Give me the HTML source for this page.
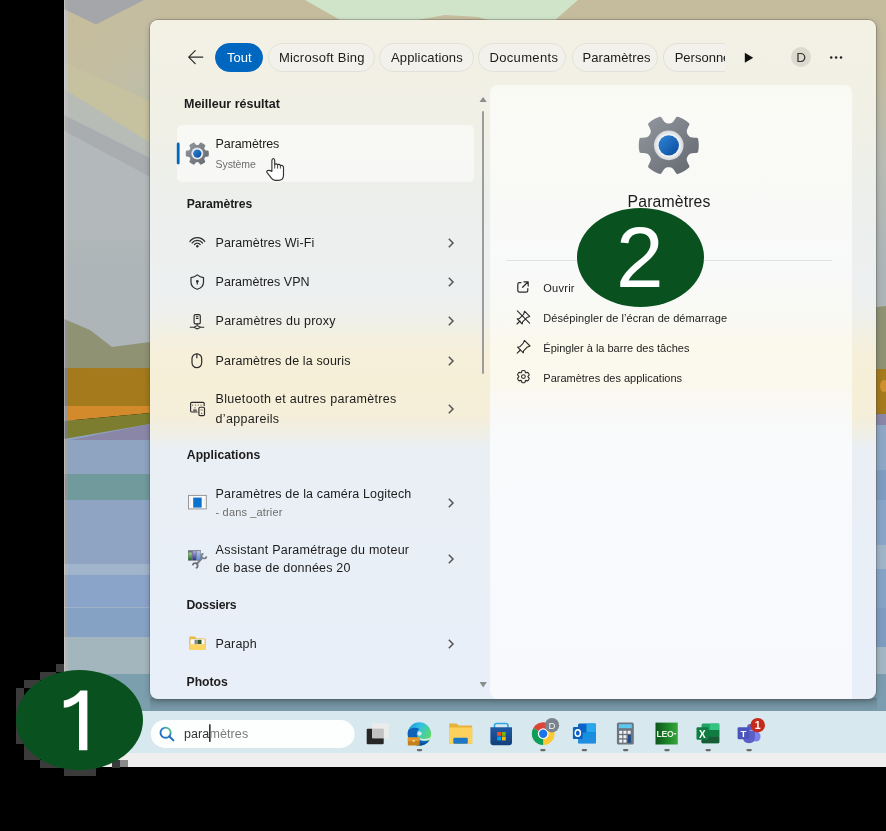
<!DOCTYPE html>
<html><head><meta charset="utf-8">
<style>
*{box-sizing:border-box;margin:0;padding:0}
html,body{width:886px;height:831px;overflow:hidden;background:#000;font-family:"Liberation Sans",sans-serif;color:#1c1c1c}
.abs{position:absolute}
#wall{position:absolute;left:64px;top:0;width:822px;height:711px}
#taskbar{position:absolute;left:64px;top:711px;width:822px;height:42px;background:#d7e9ef}
#strip{position:absolute;left:64px;top:753px;width:822px;height:14px;background:#efefef}
#panel{position:absolute;left:150px;top:20px;width:726px;height:679px;border-radius:8px;overflow:hidden;
 background:linear-gradient(180deg,#f3f1e4 0px,#f1f0e6 100px,#ecefec 180px,#edf0f0 270px,#eef0ee 290px,#f2f0e4 312px,#f6efd9 335px,#f6efd8 370px,#f5eed9 395px,#f0efe5 412px,#eaeff5 430px,#e8eff9 679px);
 box-shadow:0 0 0 1px rgba(90,90,80,.35),0 2px 6px rgba(0,0,0,.25)}
#card{position:absolute;left:340px;top:65px;width:362px;height:614px;border-radius:8px 8px 0 8px;
 background:linear-gradient(180deg,#fafaf5 0,#f9faf7 120px,#f8f9f9 180px,#f9f9f4 230px,#fbf8ec 260px,#fbf8ee 300px,#f9f9f7 325px,#f8fafc 360px,#f7f9fd 614px)}
#best{position:absolute;left:26.5px;top:105px;width:297px;height:57px;border-radius:5px;background:rgba(255,255,255,.55)}
.t{position:absolute;white-space:nowrap}
.pill{position:absolute;top:22.5px;height:29px;border-radius:14.5px;background:#f2f1ec;border:1px solid #e2e1d9}
.ell{position:absolute;background:#09521f;border-radius:50%}
.dig{position:absolute;color:#fff;font-size:83px;line-height:83px;white-space:nowrap}
</style></head><body>
<svg id="wall" viewBox="64 0 822 711" width="822" height="711">
 <defs>
  <filter id="soft" x="0" y="0" width="1" height="1"><feGaussianBlur stdDeviation="0.6"/></filter>
  <linearGradient id="gtop" x1="0" y1="0" x2="0" y2="1">
   <stop offset="0" stop-color="#c5bc9d"/><stop offset="0.18" stop-color="#c3bc9f"/><stop offset="0.4" stop-color="#b9bcb2"/><stop offset="0.7" stop-color="#adb5b8"/><stop offset="1" stop-color="#adb5b8"/>
  </linearGradient>
  <linearGradient id="gband" x1="0" y1="0" x2="0" y2="1">
   <stop offset="0" stop-color="#66828f"/><stop offset="0.3" stop-color="#6f8e9c"/><stop offset="1" stop-color="#7a9bab"/>
  </linearGradient>
   <linearGradient id="gtan" gradientUnits="userSpaceOnUse" x1="70" y1="20" x2="150" y2="100"><stop offset="0" stop-color="#c6bd9c"/><stop offset="0.5" stop-color="#c4bda1"/><stop offset="1" stop-color="#bcbea9"/></linearGradient>
 </defs>
 <g filter="url(#soft)">
 <rect x="64" y="0" width="822" height="380" fill="url(#gtop)"/>
 <rect x="64" y="420" width="822" height="291" fill="#8ea5c0"/>
 <polygon points="64,9 96,24.5 144,0 160,0 160,108 152,102 64,62" fill="url(#gtan)"/>
 <polygon points="64,0 144,0 96,24.5 64,9" fill="#a4a6a9"/>
 <polygon points="305,0 578,0 554,21 342,21" fill="#cfe4c9"/>
 <polygon points="412,21 445,15 478,17 492,21" fill="#c7bd9f"/>
 <polygon points="64,62 152,102 152,144 64,89" fill="#c6c29f"/>
 <polygon points="64,89 152,144 152,160 64,115" fill="#b8bcb6"/>
 <polygon points="64,115 152,159 152,178 64,131" fill="#a9adb0"/>
 <polygon points="64,131 152,178 152,240 64,240" fill="#b3b9ba"/>
 <polygon points="64,319 90,330 112,347 150,342 877,307 886,306 886,370 64,370" fill="#8f9273"/>
 <polygon points="64,368 886,369 886,414 64,406" fill="#a47a1e"/>
 <polygon points="64,406 150,406 150,413 64,421" fill="#d38a2c"/>
 <ellipse cx="884" cy="386" rx="4" ry="6" fill="#d1902e"/>
 <polygon points="64,421 150,413 150,424 64,439" fill="#7b7d2e"/>
 <polygon points="70,440 150,424 877,414 886,414 886,425 150,440" fill="#8a86a8"/>
 <rect x="64" y="440" width="822" height="34" fill="#8fa4c0"/>
 <rect x="64" y="474" width="90" height="26" fill="#6f9a9c"/>
 <rect x="64" y="500" width="90" height="64" fill="#8fa3c2"/>
 <rect x="64" y="564" width="90" height="11" fill="#a0b4cb"/>
 <rect x="64" y="575" width="90" height="33" fill="#8aa3c8"/>
 <rect x="64" y="607" width="90" height="1" fill="#a0b2c8"/>
 <rect x="64" y="608" width="90" height="29" fill="#85a2c5"/>
 <rect x="64" y="637" width="90" height="37" fill="#a3b6bd"/>
 <rect x="64" y="674" width="90" height="37" fill="#7b9fad"/>
 <rect x="870" y="425" width="16" height="45" fill="#8ea7c5"/>
 <rect x="870" y="470" width="16" height="30" fill="#809cc0"/>
 <rect x="870" y="500" width="16" height="45" fill="#8aa4c8"/>
 <rect x="870" y="545" width="16" height="24" fill="#a0b4c8"/>
 <rect x="870" y="569" width="16" height="39" fill="#86a3c6"/>
 <rect x="870" y="608" width="16" height="39" fill="#7f9cc0"/>
 <rect x="870" y="647" width="16" height="27" fill="#a3b6c3"/>
 <rect x="870" y="674" width="16" height="37" fill="#7c9daf"/>
 <rect x="150" y="698" width="727" height="13" fill="url(#gband)"/>
 </g>
</svg>
<div class="abs" style="left:64px;top:0;width:4px;height:711px;backdrop-filter:grayscale(1) brightness(1.02)"></div>
<div class="abs" style="left:64px;top:0;width:1px;height:711px;background:rgba(230,230,230,.35)"></div>
<div id="taskbar"></div>
<div id="strip"></div>
<svg class="abs" style="left:0;top:0" width="886" height="831" viewBox="0 0 886 831">
<defs>
<linearGradient id="edge1" x1="0" y1="0" x2="1" y2="1"><stop offset="0" stop-color="#35c1f1"/><stop offset="0.5" stop-color="#2bb0e0"/><stop offset="1" stop-color="#5ad06a"/></linearGradient>
<linearGradient id="edge2" x1="0" y1="0" x2="0" y2="1"><stop offset="0" stop-color="#0c59a4"/><stop offset="1" stop-color="#114a8b"/></linearGradient>
<linearGradient id="store" x1="0" y1="0" x2="0" y2="1"><stop offset="0" stop-color="#1f5aa6"/><stop offset="1" stop-color="#123f7c"/></linearGradient>
<linearGradient id="leo" x1="0" y1="0" x2="1" y2="0"><stop offset="0" stop-color="#0b5518"/><stop offset="0.6" stop-color="#1f8a2a"/><stop offset="1" stop-color="#3aa83c"/></linearGradient>
<linearGradient id="srch" x1="0" y1="1" x2="1" y2="0"><stop offset="0" stop-color="#1b67c2"/><stop offset="0.6" stop-color="#2a7fd0"/><stop offset="0.85" stop-color="#53c486"/></linearGradient>
</defs>
<rect x="150.8" y="719.9" width="203.8" height="28" rx="14" fill="#fdfefe"/>
<circle cx="165.6" cy="732.7" r="5.1" fill="none" stroke="url(#srch)" stroke-width="1.9"/>
<path d="M169.4,736.5 L173.4,740.4" stroke="#1d6cc4" stroke-width="2" stroke-linecap="round"/>
<rect x="209.1" y="724.3" width="1.5" height="17.6" fill="#222"/>
<rect x="366.7" y="728.7" width="17" height="15.6" rx="1" fill="#262626"/>
<rect x="372.1" y="723.3" width="16.9" height="14.9" rx="1" fill="#ececec" opacity="0.92"/>
<rect x="372.1" y="728.7" width="11.6" height="9.5" fill="#c2c2c2"/>
<defs><linearGradient id="edgeA" x1="0" y1="0" x2="1" y2="0.6"><stop offset="0" stop-color="#1f86d6"/><stop offset="0.45" stop-color="#2fc0e6"/><stop offset="1" stop-color="#62dc5a"/></linearGradient><clipPath id="edgeClip"><circle cx="419.4" cy="734" r="11.7"/></clipPath></defs>
<g clip-path="url(#edgeClip)">
<rect x="407" y="721" width="25" height="26" fill="url(#edgeA)"/>
<path d="M406,733 C409,727.5 415,726.5 419.5,729 C416.5,731 416,735 418,738 C420.5,741.5 425,742 431,739.5 L431,747 L406,747 Z" fill="#0e62b8"/>
<path d="M417.8,737.6 C420.5,740.2 425,740.6 431,738.2" fill="none" stroke="#d6e9ef" stroke-width="1.6"/>
<path d="M431,741 C427,744.5 421,745 416,743" fill="none" stroke="#0a4d96" stroke-width="2"/>
</g>
<circle cx="419.6" cy="733.6" r="2.1" fill="#d6e9ef"/>
<rect x="407.8" y="737.4" width="11.8" height="8" rx="1" fill="#c8801e"/><rect x="407.8" y="737.4" width="11.8" height="3.6" fill="#e09a2c"/><rect x="412.8" y="740" width="1.8" height="1.8" fill="#f5e3b0"/>
<path d="M449.2,743.8 V724.6 Q449.2,723.5 450.3,723.5 H456.5 L458.5,725.6 H471.1 Q472.2,725.6 472.2,726.7 V743.8 Z" fill="#e8b23a"/>
<rect x="449.2" y="727.6" width="23" height="16.2" rx="0.8" fill="#fcd25c"/>
<rect x="453.3" y="737.7" width="14.5" height="6.1" rx="1.2" fill="#1d78c9"/>
<path d="M494.5,728.2 V725.5 Q494.5,723.5 496.5,723.5 H506 Q508,723.5 508,725.5 V728.2" fill="none" stroke="#2fa8e8" stroke-width="1.6"/>
<path d="M490.4,727.2 H512 V742.2 Q512,745.2 509,745.2 H493.4 Q490.4,745.2 490.4,742.2 Z" fill="url(#store)"/>
<rect x="497.2" y="732" width="3.8" height="3.8" fill="#f25022"/><rect x="501.9" y="732" width="3.8" height="3.8" fill="#7fba00"/><rect x="497.2" y="736.6" width="3.8" height="3.8" fill="#00a4ef"/><rect x="501.9" y="736.6" width="3.8" height="3.8" fill="#ffb900"/>
<path d="M543.2,733.7 L533.33,728.00 A11.4,11.4 0 0 1 553.07,728.00 Z" fill="#db4437"/>
<path d="M543.2,733.7 L553.07,728.00 A11.4,11.4 0 0 1 543.20,745.10 Z" fill="#fcc934"/>
<path d="M543.2,733.7 L543.20,745.10 A11.4,11.4 0 0 1 533.33,728.00 Z" fill="#0f9d58"/>
<circle cx="543.2" cy="733.7" r="5.4" fill="#fff"/><circle cx="543.2" cy="733.7" r="4.2" fill="#1a73e8"/>
<circle cx="552" cy="725.2" r="7.2" fill="#7b848c"/>
<text x="552" y="728.7" text-anchor="middle" font-family="Liberation Sans" font-size="9.5" fill="#f4f4f4">D</text>
<rect x="578" y="723.5" width="17.9" height="19.7" rx="1.5" fill="#0a64c8"/>
<rect x="586.5" y="723.5" width="9.4" height="9" fill="#28a8ea"/><rect x="578" y="732.5" width="17.9" height="10.7" fill="#1490df"/>
<path d="M578,733 L587,738.5 L595.9,733 V743.2 H578 Z" fill="#1f8de0"/>
<rect x="572.9" y="726.9" width="9.8" height="12.2" rx="1.2" fill="#0f5fbd"/>
<ellipse cx="577.8" cy="733" rx="2.6" ry="3.3" fill="none" stroke="#fff" stroke-width="1.5"/>
<rect x="616.9" y="722.6" width="16.9" height="21.9" rx="1.6" fill="#6d757e"/>
<rect x="618.8" y="724.2" width="13" height="4" fill="#5cc8ef"/>
<rect x="619.2" y="730.8" width="3" height="3" fill="#f2f2f2"/>
<rect x="623.4" y="730.8" width="3" height="3" fill="#f2f2f2"/>
<rect x="627.6" y="730.8" width="3" height="3" fill="#f2f2f2"/>
<rect x="619.2" y="735.2" width="3" height="3" fill="#f2f2f2"/>
<rect x="623.4" y="735.2" width="3" height="3" fill="#f2f2f2"/>
<rect x="627.6" y="735.2" width="3" height="3" fill="#f2f2f2"/>
<rect x="619.2" y="739.6" width="3" height="3" fill="#f2f2f2"/>
<rect x="627.6" y="734.8" width="3.3" height="8" fill="#1e4a8a"/>
<rect x="623.4" y="739.6" width="3" height="3" fill="#f2f2f2"/>
<rect x="655.5" y="722.6" width="22.3" height="21.9" fill="url(#leo)"/>
<text x="656.5" y="737" font-family="Liberation Sans" font-size="8.6" font-weight="700" fill="#e8f5e6" letter-spacing="-0.3">LEO</text>
<path d="M673.8,733.8 H676.2" stroke="#e8f5e6" stroke-width="1.2"/>
<rect x="701.5" y="723.5" width="17.8" height="19.7" rx="1.5" fill="#21a366"/>
<rect x="701.5" y="730" width="17.8" height="6.6" fill="#107c41"/><rect x="701.5" y="736.6" width="17.8" height="6.6" rx="1" fill="#185c37"/><rect x="710" y="723.5" width="9.3" height="6.5" fill="#33c481"/>
<rect x="696.5" y="727.2" width="11.9" height="12.6" rx="1.2" fill="#107c41"/>
<text x="698.9" y="737.6" font-family="Liberation Sans" font-size="10" font-weight="700" fill="#fff">X</text>
<rect x="751.5" y="731.5" width="9" height="10" rx="4.5" fill="#7b83eb"/>
<path d="M743,730.5 H755 V737.5 Q755,743.2 749,743.2 Q743,743.2 743,737.5 Z" fill="#5b5fc7"/>
<circle cx="750.3" cy="727" r="3.1" fill="#5b5fc7"/>
<rect x="737.6" y="727.2" width="11.8" height="12" rx="1.2" fill="#4b53bc"/>
<text x="740.4" y="737.2" font-family="Liberation Sans" font-size="9.5" font-weight="700" fill="#fff">T</text>
<circle cx="757.7" cy="725.2" r="7.3" fill="#c42b1c"/>
<text x="757.7" y="729.2" text-anchor="middle" font-family="Liberation Sans" font-size="10.5" font-weight="700" fill="#fff">1</text>
<rect x="416.8" y="749" width="5.4" height="2.2" rx="1.1" fill="#6a6a6a"/>
<rect x="540.2" y="749" width="5.4" height="2.2" rx="1.1" fill="#6a6a6a"/>
<rect x="581.7" y="749" width="5.4" height="2.2" rx="1.1" fill="#6a6a6a"/>
<rect x="623.0" y="749" width="5.4" height="2.2" rx="1.1" fill="#6a6a6a"/>
<rect x="664.3" y="749" width="5.4" height="2.2" rx="1.1" fill="#6a6a6a"/>
<rect x="705.5" y="749" width="5.4" height="2.2" rx="1.1" fill="#6a6a6a"/>
<rect x="746.4" y="749" width="5.4" height="2.2" rx="1.1" fill="#6a6a6a"/>
</svg>

<div id="panel">
 <div id="card"></div>
 <div id="best"></div>
 <div class="pill" style="left:65px;width:48px;background:#0067c0;border-color:#0067c0"></div>
 <div class="pill" style="left:117.5px;width:107px"></div>
 <div class="pill" style="left:229px;width:95px"></div>
 <div class="pill" style="left:328px;width:88px"></div>
 <div class="pill" style="left:422px;width:86px"></div>
 <div class="pill" style="left:513.4px;width:62px;border-radius:15px 0 0 15px;border-right:none"></div>
  <div class="abs" style="left:640.5px;top:27px;width:20.3px;height:20.3px;border-radius:50%;background:#dcdace"></div>
 <!-- separator -->
 <div class="abs" style="left:356px;top:239.5px;width:326px;height:1px;background:#e2e2de"></div>
 <!-- scrollbar -->
 <div class="abs" style="left:332px;top:91px;width:2.1px;height:263px;background:#9c9c9c;border-radius:1px"></div>
</div>
<div class="t" style="left:227.0px;top:51.30px;font-size:13px;line-height:13px;font-weight:400;color:#fff;letter-spacing:0px;">Tout</div>
<div class="t" style="left:278.9px;top:51.30px;font-size:13px;line-height:13px;font-weight:400;color:#1c1c1c;letter-spacing:0.25px;">Microsoft Bing</div>
<div class="t" style="left:391.0px;top:51.30px;font-size:13px;line-height:13px;font-weight:400;color:#1c1c1c;letter-spacing:0.15px;">Applications</div>
<div class="t" style="left:489.4px;top:51.30px;font-size:13px;line-height:13px;font-weight:400;color:#1c1c1c;letter-spacing:0.35px;">Documents</div>
<div class="t" style="left:582.4px;top:51.30px;font-size:13px;line-height:13px;font-weight:400;color:#1c1c1c;letter-spacing:0.1px;">Paramètres</div>
<div class="t" style="left:674.7px;top:51.30px;font-size:13px;line-height:13px;font-weight:400;color:#1c1c1c;letter-spacing:0px;width:50.8px;overflow:hidden">Personne</div>
<div class="t" style="left:796.2px;top:51.47px;font-size:13.5px;line-height:13.5px;font-weight:400;color:#333;letter-spacing:0px;">D</div>
<div class="t" style="left:184.0px;top:97.82px;font-size:12.5px;line-height:12.5px;font-weight:700;color:#1c1c1c;letter-spacing:0px;">Meilleur résultat</div>
<div class="t" style="left:215.6px;top:138.32px;font-size:12.5px;line-height:12.5px;font-weight:400;color:#1c1c1c;letter-spacing:-0.1px;">Paramètres</div>
<div class="t" style="left:215.6px;top:159.01px;font-size:10.5px;line-height:10.5px;font-weight:400;color:#6d6d6d;letter-spacing:-0.1px;">Système</div>
<div class="t" style="left:186.7px;top:197.97px;font-size:12.2px;line-height:12.2px;font-weight:700;color:#1c1c1c;letter-spacing:-0.1px;">Paramètres</div>
<div class="t" style="left:215.6px;top:236.92px;font-size:12.5px;line-height:12.5px;font-weight:400;color:#1c1c1c;letter-spacing:0.09px;">Paramètres Wi-Fi</div>
<svg class="abs" style="left:446.9px;top:236.7px" width="9" height="12" viewBox="0 0 9 12"><path d="M1.8 1.8 L6 6 L1.8 10.2" fill="none" stroke="#555" stroke-width="1.5"/></svg>
<div class="t" style="left:215.6px;top:276.02px;font-size:12.5px;line-height:12.5px;font-weight:400;color:#1c1c1c;letter-spacing:0.01px;">Paramètres VPN</div>
<svg class="abs" style="left:446.9px;top:276px" width="9" height="12" viewBox="0 0 9 12"><path d="M1.8 1.8 L6 6 L1.8 10.2" fill="none" stroke="#555" stroke-width="1.5"/></svg>
<div class="t" style="left:215.6px;top:315.12px;font-size:12.5px;line-height:12.5px;font-weight:400;color:#1c1c1c;letter-spacing:0.21px;">Paramètres du proxy</div>
<svg class="abs" style="left:446.9px;top:315.3px" width="9" height="12" viewBox="0 0 9 12"><path d="M1.8 1.8 L6 6 L1.8 10.2" fill="none" stroke="#555" stroke-width="1.5"/></svg>
<div class="t" style="left:215.6px;top:354.52px;font-size:12.5px;line-height:12.5px;font-weight:400;color:#1c1c1c;letter-spacing:0.13px;">Paramètres de la souris</div>
<svg class="abs" style="left:446.9px;top:354.6px" width="9" height="12" viewBox="0 0 9 12"><path d="M1.8 1.8 L6 6 L1.8 10.2" fill="none" stroke="#555" stroke-width="1.5"/></svg>
<div class="t" style="left:215.6px;top:393.42px;font-size:12.5px;line-height:12.5px;font-weight:400;color:#1c1c1c;letter-spacing:0.31px;">Bluetooth et autres paramètres</div>
<div class="t" style="left:215.6px;top:412.52px;font-size:12.5px;line-height:12.5px;font-weight:400;color:#1c1c1c;letter-spacing:0.3px;">d’appareils</div>
<svg class="abs" style="left:446.9px;top:402.5px" width="9" height="12" viewBox="0 0 9 12"><path d="M1.8 1.8 L6 6 L1.8 10.2" fill="none" stroke="#555" stroke-width="1.5"/></svg>
<div class="t" style="left:186.8px;top:448.87px;font-size:12.2px;line-height:12.2px;font-weight:700;color:#1c1c1c;letter-spacing:0.03px;">Applications</div>
<div class="t" style="left:215.6px;top:487.62px;font-size:12.5px;line-height:12.5px;font-weight:400;color:#1c1c1c;letter-spacing:0.15px;">Paramètres de la caméra Logitech</div>
<div class="t" style="left:215.6px;top:507.29px;font-size:11px;line-height:11px;font-weight:400;color:#6d6d6d;letter-spacing:0.15px;">- dans _atrier</div>
<svg class="abs" style="left:446.9px;top:496.5px" width="9" height="12" viewBox="0 0 9 12"><path d="M1.8 1.8 L6 6 L1.8 10.2" fill="none" stroke="#555" stroke-width="1.5"/></svg>
<div class="t" style="left:215.6px;top:543.62px;font-size:12.5px;line-height:12.5px;font-weight:400;color:#1c1c1c;letter-spacing:0.24px;">Assistant Paramétrage du moteur</div>
<div class="t" style="left:215.6px;top:562.42px;font-size:12.5px;line-height:12.5px;font-weight:400;color:#1c1c1c;letter-spacing:0.21px;">de base de données 20</div>
<svg class="abs" style="left:446.9px;top:552.8px" width="9" height="12" viewBox="0 0 9 12"><path d="M1.8 1.8 L6 6 L1.8 10.2" fill="none" stroke="#555" stroke-width="1.5"/></svg>
<div class="t" style="left:186.5px;top:599.37px;font-size:12.2px;line-height:12.2px;font-weight:700;color:#1c1c1c;letter-spacing:-0.2px;">Dossiers</div>
<div class="t" style="left:215.5px;top:637.72px;font-size:12.5px;line-height:12.5px;font-weight:400;color:#1c1c1c;letter-spacing:0.16px;">Paraph</div>
<svg class="abs" style="left:446.9px;top:638px" width="9" height="12" viewBox="0 0 9 12"><path d="M1.8 1.8 L6 6 L1.8 10.2" fill="none" stroke="#555" stroke-width="1.5"/></svg>
<div class="t" style="left:186.5px;top:675.87px;font-size:12.2px;line-height:12.2px;font-weight:700;color:#1c1c1c;letter-spacing:0px;">Photos</div>
<div class="t" style="left:627.6px;top:194.33px;font-size:15.8px;line-height:15.8px;font-weight:400;color:#1c1c1c;letter-spacing:0.12px;">Paramètres</div>
<div class="t" style="left:543.3px;top:283.09px;font-size:11px;line-height:11px;font-weight:400;color:#1c1c1c;letter-spacing:0.25px;">Ouvrir</div>
<div class="t" style="left:543.3px;top:313.09px;font-size:11px;line-height:11px;font-weight:400;color:#1c1c1c;letter-spacing:0.08px;">Désépingler de l’écran de démarrage</div>
<div class="t" style="left:543.3px;top:342.99px;font-size:11px;line-height:11px;font-weight:400;color:#1c1c1c;letter-spacing:0px;">Épingler à la barre des tâches</div>
<div class="t" style="left:543.3px;top:372.59px;font-size:11px;line-height:11px;font-weight:400;color:#1c1c1c;letter-spacing:0px;">Paramètres des applications</div>
<div class="t" style="left:183.9px;top:728.42px;font-size:12.5px;line-height:12.5px;font-weight:400;color:#333;letter-spacing:0.12px;">para<span style="color:#7a7a7a">mètres</span></div>
<svg class="abs" style="left:0;top:0" width="886" height="831" viewBox="0 0 886 831">
<defs>
<linearGradient id="gg" x1="0" y1="0" x2="1" y2="1"><stop offset="0" stop-color="#9499a0"/><stop offset="1" stop-color="#62676f"/></linearGradient>
<linearGradient id="gb" x1="0" y1="0" x2="1" y2="1"><stop offset="0" stop-color="#2f86d8"/><stop offset="1" stop-color="#0a4a9c"/></linearGradient>
<radialGradient id="gw" cx="0.5" cy="0.5" r="0.5"><stop offset="0.6" stop-color="#ffffff"/><stop offset="1" stop-color="#d4d6da"/></radialGradient>
</defs>
<path d="M202.8,57.1 H189 M195.2,50.6 L188.7,57.1 L195.2,63.6" fill="none" stroke="#2b2b2b" stroke-width="1.25" stroke-linecap="round" stroke-linejoin="round"/>
<path d="M744.8,52.8 L753.2,57.8 L744.8,62.8 Z" fill="#111"/>
<circle cx="831.2" cy="57.6" r="1.25" fill="#222"/>
<circle cx="836.1" cy="57.6" r="1.25" fill="#222"/>
<circle cx="841.0" cy="57.6" r="1.25" fill="#222"/>
<rect x="176.8" y="142.6" width="2.8" height="21.8" rx="1.4" fill="#0067c0"/>
<path d="M208.84,153.60 L208.84,153.70 L208.84,153.80 L208.84,153.90 L208.84,154.00 L208.83,154.10 L208.83,154.20 L208.82,154.30 L208.82,154.41 L208.81,154.51 L208.80,154.61 L208.79,154.71 L208.78,154.81 L208.77,154.91 L208.76,155.01 L208.75,155.11 L208.73,155.21 L208.72,155.31 L208.70,155.41 L208.69,155.51 L208.67,155.60 L208.65,155.70 L208.63,155.80 L208.61,155.90 L208.59,156.00 L208.57,156.10 L208.54,156.20 L208.51,156.29 L208.46,156.38 L208.38,156.47 L208.24,156.53 L208.03,156.57 L207.77,156.60 L207.50,156.62 L207.24,156.64 L206.99,156.65 L206.76,156.67 L206.55,156.69 L206.36,156.72 L206.19,156.75 L206.04,156.78 L205.90,156.81 L205.78,156.85 L205.67,156.90 L205.57,156.94 L205.48,156.99 L205.40,157.04 L205.32,157.09 L205.25,157.14 L205.19,157.20 L205.13,157.25 L205.08,157.31 L205.02,157.37 L204.97,157.42 L204.92,157.48 L204.87,157.54 L204.83,157.60 L204.78,157.66 L204.74,157.72 L204.69,157.78 L204.65,157.84 L204.62,157.91 L204.59,157.98 L204.56,158.05 L204.53,158.12 L204.50,158.19 L204.47,158.26 L204.45,158.33 L204.42,158.40 L204.40,158.48 L204.38,158.56 L204.36,158.64 L204.34,158.72 L204.33,158.80 L204.32,158.89 L204.32,158.99 L204.33,159.09 L204.34,159.20 L204.36,159.31 L204.38,159.44 L204.42,159.58 L204.47,159.72 L204.53,159.89 L204.60,160.06 L204.69,160.25 L204.79,160.46 L204.90,160.69 L205.02,160.92 L205.14,161.17 L205.24,161.40 L205.31,161.61 L205.32,161.76 L205.29,161.88 L205.24,161.96 L205.17,162.04 L205.10,162.11 L205.02,162.18 L204.95,162.25 L204.87,162.31 L204.80,162.38 L204.72,162.44 L204.64,162.51 L204.56,162.57 L204.49,162.63 L204.41,162.70 L204.33,162.76 L204.25,162.82 L204.17,162.88 L204.09,162.94 L204.00,163.00 L203.92,163.06 L203.84,163.11 L203.76,163.17 L203.67,163.23 L203.59,163.28 L203.50,163.34 L203.42,163.39 L203.33,163.44 L203.25,163.50 L203.16,163.55 L203.07,163.60 L202.98,163.65 L202.90,163.70 L202.81,163.75 L202.72,163.79 L202.63,163.84 L202.54,163.89 L202.45,163.93 L202.36,163.98 L202.27,164.02 L202.18,164.06 L202.09,164.10 L202.00,164.15 L201.90,164.19 L201.81,164.23 L201.72,164.27 L201.62,164.30 L201.53,164.34 L201.44,164.38 L201.34,164.41 L201.25,164.45 L201.15,164.48 L201.06,164.52 L200.96,164.55 L200.87,164.58 L200.77,164.61 L200.67,164.64 L200.58,164.66 L200.47,164.66 L200.36,164.63 L200.23,164.54 L200.09,164.38 L199.94,164.17 L199.78,163.94 L199.64,163.72 L199.50,163.52 L199.37,163.33 L199.24,163.16 L199.13,163.00 L199.02,162.87 L198.91,162.75 L198.82,162.65 L198.72,162.57 L198.63,162.49 L198.54,162.43 L198.46,162.38 L198.37,162.33 L198.29,162.29 L198.21,162.26 L198.13,162.23 L198.05,162.21 L197.98,162.19 L197.90,162.17 L197.82,162.16 L197.75,162.14 L197.67,162.13 L197.60,162.12 L197.52,162.11 L197.45,162.10 L197.37,162.09 L197.30,162.09 L197.23,162.09 L197.15,162.10 L197.08,162.11 L197.00,162.12 L196.93,162.13 L196.85,162.14 L196.78,162.16 L196.70,162.17 L196.62,162.19 L196.55,162.21 L196.47,162.23 L196.39,162.26 L196.31,162.29 L196.23,162.33 L196.14,162.38 L196.06,162.43 L195.97,162.49 L195.88,162.57 L195.78,162.65 L195.69,162.75 L195.58,162.87 L195.47,163.00 L195.36,163.16 L195.23,163.33 L195.10,163.52 L194.96,163.72 L194.82,163.94 L194.66,164.17 L194.51,164.38 L194.37,164.54 L194.24,164.63 L194.13,164.66 L194.02,164.66 L193.93,164.64 L193.83,164.61 L193.73,164.58 L193.64,164.55 L193.54,164.52 L193.45,164.48 L193.35,164.45 L193.26,164.41 L193.16,164.38 L193.07,164.34 L192.98,164.30 L192.88,164.27 L192.79,164.23 L192.70,164.19 L192.60,164.15 L192.51,164.10 L192.42,164.06 L192.33,164.02 L192.24,163.98 L192.15,163.93 L192.06,163.89 L191.97,163.84 L191.88,163.79 L191.79,163.75 L191.70,163.70 L191.62,163.65 L191.53,163.60 L191.44,163.55 L191.35,163.50 L191.27,163.44 L191.18,163.39 L191.10,163.34 L191.01,163.28 L190.93,163.23 L190.84,163.17 L190.76,163.11 L190.68,163.06 L190.60,163.00 L190.51,162.94 L190.43,162.88 L190.35,162.82 L190.27,162.76 L190.19,162.70 L190.11,162.63 L190.04,162.57 L189.96,162.51 L189.88,162.44 L189.80,162.38 L189.73,162.31 L189.65,162.25 L189.58,162.18 L189.50,162.11 L189.43,162.04 L189.36,161.96 L189.31,161.88 L189.28,161.76 L189.29,161.61 L189.36,161.40 L189.46,161.17 L189.58,160.92 L189.70,160.69 L189.81,160.46 L189.91,160.25 L190.00,160.06 L190.07,159.89 L190.13,159.72 L190.18,159.58 L190.22,159.44 L190.24,159.31 L190.26,159.20 L190.27,159.09 L190.28,158.99 L190.28,158.89 L190.27,158.80 L190.26,158.72 L190.24,158.64 L190.22,158.56 L190.20,158.48 L190.18,158.40 L190.15,158.33 L190.13,158.26 L190.10,158.19 L190.07,158.12 L190.04,158.05 L190.01,157.98 L189.98,157.91 L189.95,157.84 L189.91,157.78 L189.86,157.72 L189.82,157.66 L189.77,157.60 L189.73,157.54 L189.68,157.48 L189.63,157.42 L189.58,157.37 L189.52,157.31 L189.47,157.25 L189.41,157.20 L189.35,157.14 L189.28,157.09 L189.20,157.04 L189.12,156.99 L189.03,156.94 L188.93,156.90 L188.82,156.85 L188.70,156.81 L188.56,156.78 L188.41,156.75 L188.24,156.72 L188.05,156.69 L187.84,156.67 L187.61,156.65 L187.36,156.64 L187.10,156.62 L186.83,156.60 L186.57,156.57 L186.36,156.53 L186.22,156.47 L186.14,156.38 L186.09,156.29 L186.06,156.20 L186.03,156.10 L186.01,156.00 L185.99,155.90 L185.97,155.80 L185.95,155.70 L185.93,155.60 L185.91,155.51 L185.90,155.41 L185.88,155.31 L185.87,155.21 L185.85,155.11 L185.84,155.01 L185.83,154.91 L185.82,154.81 L185.81,154.71 L185.80,154.61 L185.79,154.51 L185.78,154.41 L185.78,154.30 L185.77,154.20 L185.77,154.10 L185.76,154.00 L185.76,153.90 L185.76,153.80 L185.76,153.70 L185.76,153.60 L185.76,153.50 L185.76,153.40 L185.76,153.30 L185.76,153.20 L185.77,153.10 L185.77,153.00 L185.78,152.90 L185.78,152.79 L185.79,152.69 L185.80,152.59 L185.81,152.49 L185.82,152.39 L185.83,152.29 L185.84,152.19 L185.85,152.09 L185.87,151.99 L185.88,151.89 L185.90,151.79 L185.91,151.69 L185.93,151.60 L185.95,151.50 L185.97,151.40 L185.99,151.30 L186.01,151.20 L186.03,151.10 L186.06,151.00 L186.09,150.91 L186.14,150.82 L186.22,150.73 L186.36,150.67 L186.57,150.63 L186.83,150.60 L187.10,150.58 L187.36,150.56 L187.61,150.55 L187.84,150.53 L188.05,150.51 L188.24,150.48 L188.41,150.45 L188.56,150.42 L188.70,150.39 L188.82,150.35 L188.93,150.30 L189.03,150.26 L189.12,150.21 L189.20,150.16 L189.28,150.11 L189.35,150.06 L189.41,150.00 L189.47,149.95 L189.52,149.89 L189.58,149.83 L189.63,149.78 L189.68,149.72 L189.73,149.66 L189.77,149.60 L189.82,149.54 L189.86,149.48 L189.91,149.42 L189.95,149.36 L189.98,149.29 L190.01,149.22 L190.04,149.15 L190.07,149.08 L190.10,149.01 L190.13,148.94 L190.15,148.87 L190.18,148.80 L190.20,148.72 L190.22,148.64 L190.24,148.56 L190.26,148.48 L190.27,148.40 L190.28,148.31 L190.28,148.21 L190.27,148.11 L190.26,148.00 L190.24,147.89 L190.22,147.76 L190.18,147.62 L190.13,147.48 L190.07,147.31 L190.00,147.14 L189.91,146.95 L189.81,146.74 L189.70,146.51 L189.58,146.28 L189.46,146.03 L189.36,145.80 L189.29,145.59 L189.28,145.44 L189.31,145.32 L189.36,145.24 L189.43,145.16 L189.50,145.09 L189.58,145.02 L189.65,144.95 L189.73,144.89 L189.80,144.82 L189.88,144.76 L189.96,144.69 L190.04,144.63 L190.11,144.57 L190.19,144.50 L190.27,144.44 L190.35,144.38 L190.43,144.32 L190.51,144.26 L190.60,144.20 L190.68,144.14 L190.76,144.09 L190.84,144.03 L190.93,143.97 L191.01,143.92 L191.10,143.86 L191.18,143.81 L191.27,143.76 L191.35,143.70 L191.44,143.65 L191.53,143.60 L191.62,143.55 L191.70,143.50 L191.79,143.45 L191.88,143.41 L191.97,143.36 L192.06,143.31 L192.15,143.27 L192.24,143.22 L192.33,143.18 L192.42,143.14 L192.51,143.10 L192.60,143.05 L192.70,143.01 L192.79,142.97 L192.88,142.93 L192.98,142.90 L193.07,142.86 L193.16,142.82 L193.26,142.79 L193.35,142.75 L193.45,142.72 L193.54,142.68 L193.64,142.65 L193.73,142.62 L193.83,142.59 L193.93,142.56 L194.02,142.54 L194.13,142.54 L194.24,142.57 L194.37,142.66 L194.51,142.82 L194.66,143.03 L194.82,143.26 L194.96,143.48 L195.10,143.68 L195.23,143.87 L195.36,144.04 L195.47,144.20 L195.58,144.33 L195.69,144.45 L195.78,144.55 L195.88,144.63 L195.97,144.71 L196.06,144.77 L196.14,144.82 L196.23,144.87 L196.31,144.91 L196.39,144.94 L196.47,144.97 L196.55,144.99 L196.62,145.01 L196.70,145.03 L196.78,145.04 L196.85,145.06 L196.93,145.07 L197.00,145.08 L197.08,145.09 L197.15,145.10 L197.23,145.11 L197.30,145.11 L197.37,145.11 L197.45,145.10 L197.52,145.09 L197.60,145.08 L197.67,145.07 L197.75,145.06 L197.82,145.04 L197.90,145.03 L197.98,145.01 L198.05,144.99 L198.13,144.97 L198.21,144.94 L198.29,144.91 L198.37,144.87 L198.46,144.82 L198.54,144.77 L198.63,144.71 L198.72,144.63 L198.82,144.55 L198.91,144.45 L199.02,144.33 L199.13,144.20 L199.24,144.04 L199.37,143.87 L199.50,143.68 L199.64,143.48 L199.78,143.26 L199.94,143.03 L200.09,142.82 L200.23,142.66 L200.36,142.57 L200.47,142.54 L200.58,142.54 L200.67,142.56 L200.77,142.59 L200.87,142.62 L200.96,142.65 L201.06,142.68 L201.15,142.72 L201.25,142.75 L201.34,142.79 L201.44,142.82 L201.53,142.86 L201.62,142.90 L201.72,142.93 L201.81,142.97 L201.90,143.01 L202.00,143.05 L202.09,143.10 L202.18,143.14 L202.27,143.18 L202.36,143.22 L202.45,143.27 L202.54,143.31 L202.63,143.36 L202.72,143.41 L202.81,143.45 L202.90,143.50 L202.98,143.55 L203.07,143.60 L203.16,143.65 L203.25,143.70 L203.33,143.76 L203.42,143.81 L203.50,143.86 L203.59,143.92 L203.67,143.97 L203.76,144.03 L203.84,144.09 L203.92,144.14 L204.00,144.20 L204.09,144.26 L204.17,144.32 L204.25,144.38 L204.33,144.44 L204.41,144.50 L204.49,144.57 L204.56,144.63 L204.64,144.69 L204.72,144.76 L204.80,144.82 L204.87,144.89 L204.95,144.95 L205.02,145.02 L205.10,145.09 L205.17,145.16 L205.24,145.24 L205.29,145.32 L205.32,145.44 L205.31,145.59 L205.24,145.80 L205.14,146.03 L205.02,146.28 L204.90,146.51 L204.79,146.74 L204.69,146.95 L204.60,147.14 L204.53,147.31 L204.47,147.48 L204.42,147.62 L204.38,147.76 L204.36,147.89 L204.34,148.00 L204.33,148.11 L204.32,148.21 L204.32,148.31 L204.33,148.40 L204.34,148.48 L204.36,148.56 L204.38,148.64 L204.40,148.72 L204.42,148.80 L204.45,148.87 L204.47,148.94 L204.50,149.01 L204.53,149.08 L204.56,149.15 L204.59,149.22 L204.62,149.29 L204.65,149.36 L204.69,149.42 L204.74,149.48 L204.78,149.54 L204.83,149.60 L204.87,149.66 L204.92,149.72 L204.97,149.78 L205.02,149.83 L205.08,149.89 L205.13,149.95 L205.19,150.00 L205.25,150.06 L205.32,150.11 L205.40,150.16 L205.48,150.21 L205.57,150.26 L205.67,150.30 L205.78,150.35 L205.90,150.39 L206.04,150.42 L206.19,150.45 L206.36,150.48 L206.55,150.51 L206.76,150.53 L206.99,150.55 L207.24,150.56 L207.50,150.58 L207.77,150.60 L208.03,150.63 L208.24,150.67 L208.38,150.73 L208.46,150.82 L208.51,150.91 L208.54,151.00 L208.57,151.10 L208.59,151.20 L208.61,151.30 L208.63,151.40 L208.65,151.50 L208.67,151.60 L208.69,151.69 L208.70,151.79 L208.72,151.89 L208.73,151.99 L208.75,152.09 L208.76,152.19 L208.77,152.29 L208.78,152.39 L208.79,152.49 L208.80,152.59 L208.81,152.69 L208.82,152.79 L208.82,152.90 L208.83,153.00 L208.83,153.10 L208.84,153.20 L208.84,153.30 L208.84,153.40 L208.84,153.50 Z" fill="url(#gg)" stroke-linejoin="round"/>
<circle cx="197.3" cy="153.6" r="6" fill="url(#gw)"/>
<circle cx="197.3" cy="153.6" r="4.2" fill="url(#gb)"/>
<path d="M698.75,145.35 L698.75,145.61 L698.75,145.87 L698.74,146.14 L698.74,146.40 L698.73,146.66 L698.71,146.92 L698.70,147.18 L698.68,147.44 L698.66,147.70 L698.64,147.97 L698.62,148.23 L698.59,148.49 L698.56,148.75 L698.53,149.01 L698.50,149.27 L698.46,149.53 L698.43,149.78 L698.39,150.04 L698.34,150.30 L698.30,150.56 L698.25,150.82 L698.20,151.08 L698.15,151.33 L698.10,151.59 L698.04,151.84 L697.97,152.10 L697.86,152.34 L697.68,152.56 L697.34,152.74 L696.82,152.87 L696.14,152.95 L695.41,153.00 L694.69,153.03 L694.01,153.07 L693.39,153.12 L692.82,153.17 L692.30,153.23 L691.84,153.30 L691.42,153.38 L691.05,153.47 L690.72,153.56 L690.42,153.67 L690.16,153.78 L689.92,153.90 L689.70,154.03 L689.50,154.16 L689.32,154.29 L689.15,154.43 L689.00,154.58 L688.85,154.72 L688.71,154.87 L688.58,155.02 L688.45,155.17 L688.33,155.33 L688.21,155.48 L688.09,155.63 L687.98,155.79 L687.86,155.94 L687.75,156.10 L687.64,156.26 L687.56,156.43 L687.48,156.61 L687.40,156.78 L687.33,156.96 L687.25,157.14 L687.18,157.32 L687.11,157.50 L687.04,157.69 L686.98,157.88 L686.92,158.07 L686.86,158.27 L686.82,158.48 L686.78,158.69 L686.75,158.92 L686.74,159.15 L686.74,159.40 L686.75,159.67 L686.79,159.96 L686.85,160.27 L686.93,160.60 L687.04,160.97 L687.18,161.37 L687.35,161.81 L687.55,162.28 L687.80,162.80 L688.07,163.37 L688.38,163.97 L688.70,164.62 L689.02,165.27 L689.30,165.90 L689.45,166.42 L689.46,166.80 L689.36,167.07 L689.20,167.28 L689.02,167.47 L688.83,167.65 L688.63,167.82 L688.43,167.99 L688.24,168.17 L688.04,168.33 L687.84,168.50 L687.63,168.67 L687.43,168.83 L687.22,168.99 L687.02,169.15 L686.81,169.31 L686.60,169.47 L686.39,169.62 L686.17,169.78 L685.96,169.93 L685.74,170.08 L685.53,170.22 L685.31,170.37 L685.09,170.51 L684.87,170.66 L684.65,170.80 L684.43,170.93 L684.20,171.07 L683.98,171.20 L683.75,171.33 L683.53,171.46 L683.30,171.59 L683.07,171.72 L682.84,171.84 L682.60,171.96 L682.37,172.08 L682.14,172.20 L681.90,172.32 L681.67,172.43 L681.43,172.54 L681.19,172.65 L680.95,172.76 L680.71,172.87 L680.47,172.97 L680.23,173.07 L679.99,173.17 L679.75,173.27 L679.50,173.36 L679.26,173.45 L679.01,173.55 L678.77,173.63 L678.52,173.72 L678.27,173.80 L678.02,173.88 L677.77,173.96 L677.52,174.02 L677.25,174.06 L676.97,174.01 L676.64,173.81 L676.27,173.42 L675.87,172.87 L675.46,172.26 L675.07,171.66 L674.69,171.09 L674.34,170.57 L674.01,170.10 L673.70,169.68 L673.41,169.32 L673.13,169.00 L672.87,168.72 L672.62,168.48 L672.38,168.28 L672.15,168.10 L671.93,167.96 L671.71,167.83 L671.50,167.73 L671.29,167.64 L671.08,167.56 L670.88,167.50 L670.68,167.44 L670.49,167.40 L670.29,167.36 L670.09,167.32 L669.90,167.29 L669.71,167.27 L669.51,167.24 L669.32,167.22 L669.13,167.20 L668.94,167.18 L668.75,167.16 L668.56,167.18 L668.37,167.20 L668.18,167.22 L667.99,167.24 L667.79,167.27 L667.60,167.29 L667.41,167.32 L667.21,167.36 L667.01,167.40 L666.82,167.44 L666.62,167.50 L666.42,167.56 L666.21,167.64 L666.00,167.73 L665.79,167.83 L665.57,167.96 L665.35,168.10 L665.12,168.28 L664.88,168.48 L664.63,168.72 L664.37,169.00 L664.09,169.32 L663.80,169.68 L663.49,170.10 L663.16,170.57 L662.81,171.09 L662.43,171.66 L662.04,172.26 L661.63,172.87 L661.23,173.42 L660.86,173.81 L660.53,174.01 L660.25,174.06 L659.98,174.02 L659.73,173.96 L659.48,173.88 L659.23,173.80 L658.98,173.72 L658.73,173.63 L658.49,173.55 L658.24,173.45 L658.00,173.36 L657.75,173.27 L657.51,173.17 L657.27,173.07 L657.03,172.97 L656.79,172.87 L656.55,172.76 L656.31,172.65 L656.07,172.54 L655.83,172.43 L655.60,172.32 L655.36,172.20 L655.13,172.08 L654.90,171.96 L654.66,171.84 L654.43,171.72 L654.20,171.59 L653.97,171.46 L653.75,171.33 L653.52,171.20 L653.30,171.07 L653.07,170.93 L652.85,170.80 L652.63,170.66 L652.41,170.51 L652.19,170.37 L651.97,170.22 L651.76,170.08 L651.54,169.93 L651.33,169.78 L651.11,169.62 L650.90,169.47 L650.69,169.31 L650.48,169.15 L650.28,168.99 L650.07,168.83 L649.87,168.67 L649.66,168.50 L649.46,168.33 L649.26,168.17 L649.07,167.99 L648.87,167.82 L648.67,167.65 L648.48,167.47 L648.30,167.28 L648.14,167.07 L648.04,166.80 L648.05,166.42 L648.20,165.90 L648.48,165.27 L648.80,164.62 L649.12,163.97 L649.43,163.37 L649.70,162.80 L649.95,162.28 L650.15,161.81 L650.32,161.37 L650.46,160.97 L650.57,160.60 L650.65,160.27 L650.71,159.96 L650.75,159.67 L650.76,159.40 L650.76,159.15 L650.75,158.92 L650.72,158.69 L650.68,158.48 L650.64,158.27 L650.58,158.07 L650.52,157.88 L650.46,157.69 L650.39,157.50 L650.32,157.32 L650.25,157.14 L650.17,156.96 L650.10,156.78 L650.02,156.61 L649.94,156.43 L649.86,156.26 L649.75,156.10 L649.64,155.94 L649.52,155.79 L649.41,155.63 L649.29,155.48 L649.17,155.33 L649.05,155.17 L648.92,155.02 L648.79,154.87 L648.65,154.72 L648.50,154.58 L648.35,154.43 L648.18,154.29 L648.00,154.16 L647.80,154.03 L647.58,153.90 L647.34,153.78 L647.08,153.67 L646.78,153.56 L646.45,153.47 L646.08,153.38 L645.66,153.30 L645.20,153.23 L644.68,153.17 L644.11,153.12 L643.49,153.07 L642.81,153.03 L642.09,153.00 L641.36,152.95 L640.68,152.87 L640.16,152.74 L639.82,152.56 L639.64,152.34 L639.53,152.10 L639.46,151.84 L639.40,151.59 L639.35,151.33 L639.30,151.08 L639.25,150.82 L639.20,150.56 L639.16,150.30 L639.11,150.04 L639.07,149.78 L639.04,149.53 L639.00,149.27 L638.97,149.01 L638.94,148.75 L638.91,148.49 L638.88,148.23 L638.86,147.97 L638.84,147.70 L638.82,147.44 L638.80,147.18 L638.79,146.92 L638.77,146.66 L638.76,146.40 L638.76,146.14 L638.75,145.87 L638.75,145.61 L638.75,145.35 L638.75,145.09 L638.75,144.83 L638.76,144.56 L638.76,144.30 L638.77,144.04 L638.79,143.78 L638.80,143.52 L638.82,143.26 L638.84,143.00 L638.86,142.73 L638.88,142.47 L638.91,142.21 L638.94,141.95 L638.97,141.69 L639.00,141.43 L639.04,141.17 L639.07,140.92 L639.11,140.66 L639.16,140.40 L639.20,140.14 L639.25,139.88 L639.30,139.62 L639.35,139.37 L639.40,139.11 L639.46,138.86 L639.53,138.60 L639.64,138.36 L639.82,138.14 L640.16,137.96 L640.68,137.83 L641.36,137.75 L642.09,137.70 L642.81,137.67 L643.49,137.63 L644.11,137.58 L644.68,137.53 L645.20,137.47 L645.66,137.40 L646.08,137.32 L646.45,137.23 L646.78,137.14 L647.08,137.03 L647.34,136.92 L647.58,136.80 L647.80,136.67 L648.00,136.54 L648.18,136.41 L648.35,136.27 L648.50,136.12 L648.65,135.98 L648.79,135.83 L648.92,135.68 L649.05,135.53 L649.17,135.37 L649.29,135.22 L649.41,135.07 L649.52,134.91 L649.64,134.76 L649.75,134.60 L649.86,134.44 L649.94,134.27 L650.02,134.09 L650.10,133.92 L650.17,133.74 L650.25,133.56 L650.32,133.38 L650.39,133.20 L650.46,133.01 L650.52,132.82 L650.58,132.63 L650.64,132.43 L650.68,132.22 L650.72,132.01 L650.75,131.78 L650.76,131.55 L650.76,131.30 L650.75,131.03 L650.71,130.74 L650.65,130.43 L650.57,130.10 L650.46,129.73 L650.32,129.33 L650.15,128.89 L649.95,128.42 L649.70,127.90 L649.43,127.33 L649.12,126.73 L648.80,126.08 L648.48,125.43 L648.20,124.80 L648.05,124.28 L648.04,123.90 L648.14,123.63 L648.30,123.42 L648.48,123.23 L648.67,123.05 L648.87,122.88 L649.07,122.71 L649.26,122.53 L649.46,122.37 L649.66,122.20 L649.87,122.03 L650.07,121.87 L650.28,121.71 L650.48,121.55 L650.69,121.39 L650.90,121.23 L651.11,121.08 L651.33,120.92 L651.54,120.77 L651.76,120.62 L651.97,120.48 L652.19,120.33 L652.41,120.19 L652.63,120.04 L652.85,119.90 L653.07,119.77 L653.30,119.63 L653.52,119.50 L653.75,119.37 L653.97,119.24 L654.20,119.11 L654.43,118.98 L654.66,118.86 L654.90,118.74 L655.13,118.62 L655.36,118.50 L655.60,118.38 L655.83,118.27 L656.07,118.16 L656.31,118.05 L656.55,117.94 L656.79,117.83 L657.03,117.73 L657.27,117.63 L657.51,117.53 L657.75,117.43 L658.00,117.34 L658.24,117.25 L658.49,117.15 L658.73,117.07 L658.98,116.98 L659.23,116.90 L659.48,116.82 L659.73,116.74 L659.98,116.68 L660.25,116.64 L660.53,116.69 L660.86,116.89 L661.23,117.28 L661.63,117.83 L662.04,118.44 L662.43,119.04 L662.81,119.61 L663.16,120.13 L663.49,120.60 L663.80,121.02 L664.09,121.38 L664.37,121.70 L664.63,121.98 L664.88,122.22 L665.12,122.42 L665.35,122.60 L665.57,122.74 L665.79,122.87 L666.00,122.97 L666.21,123.06 L666.42,123.14 L666.62,123.20 L666.82,123.26 L667.01,123.30 L667.21,123.34 L667.41,123.38 L667.60,123.41 L667.79,123.43 L667.99,123.46 L668.18,123.48 L668.37,123.50 L668.56,123.52 L668.75,123.54 L668.94,123.52 L669.13,123.50 L669.32,123.48 L669.51,123.46 L669.71,123.43 L669.90,123.41 L670.09,123.38 L670.29,123.34 L670.49,123.30 L670.68,123.26 L670.88,123.20 L671.08,123.14 L671.29,123.06 L671.50,122.97 L671.71,122.87 L671.93,122.74 L672.15,122.60 L672.38,122.42 L672.62,122.22 L672.87,121.98 L673.13,121.70 L673.41,121.38 L673.70,121.02 L674.01,120.60 L674.34,120.13 L674.69,119.61 L675.07,119.04 L675.46,118.44 L675.87,117.83 L676.27,117.28 L676.64,116.89 L676.97,116.69 L677.25,116.64 L677.52,116.68 L677.77,116.74 L678.02,116.82 L678.27,116.90 L678.52,116.98 L678.77,117.07 L679.01,117.15 L679.26,117.25 L679.50,117.34 L679.75,117.43 L679.99,117.53 L680.23,117.63 L680.47,117.73 L680.71,117.83 L680.95,117.94 L681.19,118.05 L681.43,118.16 L681.67,118.27 L681.90,118.38 L682.14,118.50 L682.37,118.62 L682.60,118.74 L682.84,118.86 L683.07,118.98 L683.30,119.11 L683.53,119.24 L683.75,119.37 L683.98,119.50 L684.20,119.63 L684.43,119.77 L684.65,119.90 L684.87,120.04 L685.09,120.19 L685.31,120.33 L685.53,120.48 L685.74,120.62 L685.96,120.77 L686.17,120.92 L686.39,121.08 L686.60,121.23 L686.81,121.39 L687.02,121.55 L687.22,121.71 L687.43,121.87 L687.63,122.03 L687.84,122.20 L688.04,122.37 L688.24,122.53 L688.43,122.71 L688.63,122.88 L688.83,123.05 L689.02,123.23 L689.20,123.42 L689.36,123.63 L689.46,123.90 L689.45,124.28 L689.30,124.80 L689.02,125.43 L688.70,126.08 L688.38,126.73 L688.07,127.33 L687.80,127.90 L687.55,128.42 L687.35,128.89 L687.18,129.33 L687.04,129.73 L686.93,130.10 L686.85,130.43 L686.79,130.74 L686.75,131.03 L686.74,131.30 L686.74,131.55 L686.75,131.78 L686.78,132.01 L686.82,132.22 L686.86,132.43 L686.92,132.63 L686.98,132.82 L687.04,133.01 L687.11,133.20 L687.18,133.38 L687.25,133.56 L687.33,133.74 L687.40,133.92 L687.48,134.09 L687.56,134.27 L687.64,134.44 L687.75,134.60 L687.86,134.76 L687.98,134.91 L688.09,135.07 L688.21,135.22 L688.33,135.37 L688.45,135.53 L688.58,135.68 L688.71,135.83 L688.85,135.98 L689.00,136.12 L689.15,136.27 L689.32,136.41 L689.50,136.54 L689.70,136.67 L689.92,136.80 L690.16,136.92 L690.42,137.03 L690.72,137.14 L691.05,137.23 L691.42,137.32 L691.84,137.40 L692.30,137.47 L692.82,137.53 L693.39,137.58 L694.01,137.63 L694.69,137.67 L695.41,137.70 L696.14,137.75 L696.82,137.83 L697.34,137.96 L697.68,138.14 L697.86,138.36 L697.97,138.60 L698.04,138.86 L698.10,139.11 L698.15,139.37 L698.20,139.62 L698.25,139.88 L698.30,140.14 L698.34,140.40 L698.39,140.66 L698.43,140.92 L698.46,141.17 L698.50,141.43 L698.53,141.69 L698.56,141.95 L698.59,142.21 L698.62,142.47 L698.64,142.73 L698.66,143.00 L698.68,143.26 L698.70,143.52 L698.71,143.78 L698.73,144.04 L698.74,144.30 L698.74,144.56 L698.75,144.83 L698.75,145.09 Z" fill="url(#gg)" stroke-linejoin="round"/>
<circle cx="668.75" cy="145.35" r="14.8" fill="url(#gw)"/>
<circle cx="668.75" cy="145.35" r="10.2" fill="url(#gb)"/>
<path d="M194.43,244.59 A3.5,3.5 0 0 1 200.17,244.59" fill="none" stroke="#2b2b2b" stroke-width="1.3" stroke-linecap="round"/>
<path d="M192.14,242.99 A6.3,6.3 0 0 1 202.46,242.99" fill="none" stroke="#2b2b2b" stroke-width="1.3" stroke-linecap="round"/>
<path d="M189.93,241.44 A9.0,9.0 0 0 1 204.67,241.44" fill="none" stroke="#2b2b2b" stroke-width="1.3" stroke-linecap="round"/>
<circle cx="197.3" cy="246.29999999999998" r="1.2" fill="#2b2b2b"/>
<path d="M197.3,274.9 C195.3,276.6 193.2,277.4 191,277.6 V282.2 C191,285.6 193.4,288 197.3,289.3 C201.2,288 203.5,285.6 203.5,282.2 V277.6 C201.4,277.4 199.3,276.6 197.3,274.9 Z" fill="none" stroke="#2b2b2b" stroke-width="1.2" stroke-linejoin="round"/>
<circle cx="197.3" cy="281.3" r="1.3" fill="#2b2b2b"/><rect x="196.7" y="281.5" width="1.2" height="3" fill="#2b2b2b"/>
<rect x="194.1" y="314.6" width="6.2" height="9.2" rx="1.4" fill="none" stroke="#2b2b2b" stroke-width="1.15"/>
<path d="M195.9,316.8 H198.5 M195.9,318.5 H198.5 M197.2,323.8 V325.6 M189.8,327.3 H194 M200.6,327.3 H204.2 M194,327.3 L197.2,325.6 L200.6,327.3 L197.2,329 Z" fill="none" stroke="#2b2b2b" stroke-width="1.05" stroke-linejoin="round"/>
<rect x="192" y="353.8" width="9.7" height="13.9" rx="4.85" fill="none" stroke="#2b2b2b" stroke-width="1.2"/>
<path d="M196.85,353.8 V358.2" stroke="#2b2b2b" stroke-width="1.2"/>
<path d="M204.2,406 V403.6 Q204.2,402.4 203,402.4 H191.8 Q190.6,402.4 190.6,403.6 V410.8 Q190.6,412 191.8,412 H197.6" fill="none" stroke="#2b2b2b" stroke-width="1.15"/>
<rect x="198.9" y="407.2" width="5.6" height="8.4" rx="1.2" fill="none" stroke="#2b2b2b" stroke-width="1.15"/>
<rect x="192.1" y="404.6" width="1" height="1" fill="#555"/>
<rect x="194.9" y="404.6" width="1" height="1" fill="#555"/>
<rect x="197.7" y="404.6" width="1" height="1" fill="#555"/>
<rect x="200.6" y="404.6" width="1" height="1" fill="#555"/>
<rect x="193.2" y="409.3" width="3.5" height="2.5" fill="#666"/><rect x="194.4" y="407.3" width="1.2" height="1" fill="#777"/>
<rect x="200.6" y="409.5" width="2.2" height="0.9" fill="#666"/><circle cx="201.7" cy="413.3" r="0.6" fill="#2b2b2b"/>
<rect x="188.5" y="495.4" width="17.8" height="13.5" fill="#fbfbfb" stroke="#8d8d8d" stroke-width="0.9"/>
<rect x="193.2" y="497.6" width="8.5" height="10" fill="#0b72cf"/>
<path d="M190.3,498.5 v8 M204.3,498.5 v8" stroke="#c8c8c8" stroke-width="0.6" stroke-dasharray="0.8 0.8"/>
<defs><linearGradient id="agr" x1="0" y1="0" x2="0" y2="1"><stop offset="0" stop-color="#9ad888"/><stop offset="1" stop-color="#1f6a22"/></linearGradient><linearGradient id="apu" x1="0" y1="0" x2="0" y2="1"><stop offset="0" stop-color="#b0a8f4"/><stop offset="1" stop-color="#2e2c8a"/></linearGradient><linearGradient id="abl" x1="0" y1="0" x2="0" y2="1"><stop offset="0" stop-color="#b8c4d8"/><stop offset="1" stop-color="#5a8ee0"/></linearGradient></defs>
<rect x="188" y="550.2" width="13" height="10.4" fill="#70747c"/>
<rect x="188.5" y="552.6" width="3.3" height="7.6" fill="url(#agr)"/><rect x="192.7" y="551.2" width="3.3" height="9" fill="url(#apu)"/><rect x="196.6" y="551" width="4" height="9.2" fill="url(#abl)"/>
<path d="M196.89,563.76 L202.31,557.84" stroke="#777c85" stroke-width="2" stroke-linecap="round"/>
<path d="M206.48,556.33 A2.5,2.5 0 1 1 203.46,553.56" fill="none" stroke="#777c85" stroke-width="1.7"/>
<path d="M192.72,565.27 A2.5,2.5 0 1 1 195.74,568.04" fill="none" stroke="#6a6e77" stroke-width="1.7"/>
<path d="M189.2,649.6 V637.6 Q189.2,636.5 190.3,636.5 H195 L196.6,638.4 H204.6 Q205.7,638.4 205.7,639.5 V649.6 Z" fill="#e9ba45"/>
<rect x="190.5" y="639.2" width="14" height="5.4" fill="#fbfbf6"/><rect x="194.5" y="639.8" width="3.5" height="4.5" fill="#8a8a8a"/><rect x="198" y="639.8" width="3.5" height="4.2" fill="#2f5a2a"/>
<path d="M189.2,644.5 H205.7 V648.6 Q205.7,649.8 204.6,649.8 H190.3 Q189.2,649.8 189.2,648.6 Z" fill="#fcd462"/>
<path d="M479.5,102.1 L483.1,96.9 L486.7,102.1 Z" fill="#8c8c8c"/>
<path d="M479.6,682.1 L486.8,682.1 L483.2,687.6 Z" fill="#8c8c8c"/>
<path d="M271.9,171.5 V160.6 Q271.9,158.6 273.3,158.6 Q274.7,158.6 274.7,160.6 V164.6 Q276.2,163.3 277.6,164.6 Q279.6,164 280.4,165.6 Q282.6,164.8 283.5,167 V175.5 Q283.3,180.3 278.5,180.4 H275.2 Q273,180.3 271.4,178.2 L266.9,172.4 Q266.3,171.3 267.5,170.6 Q269.4,169.8 271.9,171.5 Z" fill="#fff" stroke="#333" stroke-width="1.15" stroke-linejoin="round"/>
<path d="M274.7,164.6 V168.6 M277.6,164.6 V168.6 M280.4,165.6 V168.6" stroke="#333" stroke-width="0.9"/>
<path d="M521,282.6 H519.5 Q517.8,282.6 517.8,284.3 V290.5 Q517.8,292.2 519.5,292.2 H526.1 Q527.8,292.2 527.8,290.5 V288.6" fill="none" stroke="#2b2b2b" stroke-width="1.2" stroke-linecap="round"/>
<path d="M522.6,287.3 L528.2,281.8 M523.9,281.8 H528.2 V286.1" fill="none" stroke="#2b2b2b" stroke-width="1.2" stroke-linecap="round" stroke-linejoin="round"/>
<path d="M517.3,310.8 L529.6,323.1" stroke="#2b2b2b" stroke-width="1.1" stroke-linecap="round"/>
<path d="M524.5,311.2 L529.7,316.4 L526.9,317.6 L522.6,321.9 L522.3,324 L517.2,318.9 L519.3,318.6 L523.6,314.3 Z" fill="none" stroke="#2b2b2b" stroke-width="1.1" stroke-linejoin="round"/>
<path d="M520,321 L517,324" stroke="#2b2b2b" stroke-width="1.1" stroke-linecap="round"/>
<path d="M524.4,340.4 L530,346 L527,347.3 L523.6,350.8 L523.3,352.8 L517.6,347.1 L519.7,346.8 L523.1,343.4 Z" fill="none" stroke="#2b2b2b" stroke-width="1.1" stroke-linejoin="round"/>
<path d="M520.4,350 L517.2,353.2" stroke="#2b2b2b" stroke-width="1.1" stroke-linecap="round"/>
<path d="M527.99,376.92 L529.26,378.28 A6.10,6.10 0 0 1 527.79,380.84 L525.97,380.41 Q525.58,380.38 525.42,380.73 L524.88,382.52 A6.10,6.10 0 0 1 521.92,382.52 L521.38,380.73 Q521.22,380.38 520.83,380.41 L519.01,380.84 A6.10,6.10 0 0 1 517.54,378.28 L518.81,376.92 Q519.03,376.60 518.81,376.28 L517.54,374.92 A6.10,6.10 0 0 1 519.01,372.36 L520.83,372.79 Q521.22,372.82 521.38,372.47 L521.92,370.68 A6.10,6.10 0 0 1 524.88,370.68 L525.42,372.47 Q525.58,372.82 525.97,372.79 L527.79,372.36 A6.10,6.10 0 0 1 529.26,374.92 L527.99,376.28 Q527.77,376.60 527.99,376.92 Z" fill="none" stroke="#2b2b2b" stroke-width="1.1" stroke-linejoin="round"/>
<circle cx="523.4" cy="376.6" r="1.9" fill="none" stroke="#2b2b2b" stroke-width="1.1"/>
</svg>
<svg class="abs" style="left:0;top:0" width="886" height="831"><rect x="56" y="664" width="8" height="8" fill="#3b3b3b"/><rect x="40" y="672" width="8" height="8" fill="#3b3b3b"/><rect x="48" y="672" width="8" height="8" fill="#3b3b3b"/><rect x="24" y="680" width="8" height="8" fill="#3b3b3b"/><rect x="32" y="680" width="8" height="8" fill="#3b3b3b"/><rect x="16" y="688" width="8" height="8" fill="#3b3b3b"/><rect x="16" y="696" width="8" height="8" fill="#3b3b3b"/><rect x="16" y="704" width="8" height="8" fill="#3b3b3b"/><rect x="16" y="712" width="8" height="8" fill="#3b3b3b"/><rect x="16" y="720" width="8" height="8" fill="#3b3b3b"/><rect x="16" y="728" width="8" height="8" fill="#3b3b3b"/><rect x="16" y="736" width="8" height="8" fill="#3b3b3b"/><rect x="24" y="744" width="8" height="8" fill="#3b3b3b"/><rect x="32" y="744" width="8" height="8" fill="#3b3b3b"/><rect x="24" y="752" width="8" height="8" fill="#3b3b3b"/><rect x="32" y="752" width="8" height="8" fill="#3b3b3b"/><rect x="40" y="760" width="8" height="8" fill="#3b3b3b"/><rect x="48" y="760" width="8" height="8" fill="#3b3b3b"/><rect x="56" y="760" width="8" height="8" fill="#3b3b3b"/><rect x="64" y="768" width="8" height="8" fill="#3b3b3b"/><rect x="72" y="768" width="8" height="8" fill="#3b3b3b"/><rect x="80" y="768" width="8" height="8" fill="#3b3b3b"/><rect x="88" y="768" width="8" height="8" fill="#3b3b3b"/><rect x="112" y="760" width="8" height="8" fill="#3b3b3b"/><rect x="120" y="760" width="8" height="7" fill="#8a8a8a"/></svg>
<div class="ell" style="left:16.2px;top:670.3px;width:127px;height:99.5px"></div>
<div class="ell" style="left:577.1px;top:207.9px;width:127px;height:98.8px"></div>
<svg class="abs" style="left:0;top:0" width="886" height="831"><path d="M79,701.2 C74.5,705 69.5,707.3 63.8,707.8 L63.8,700.6 C70.5,699.2 76.5,695.5 80.4,690.5 L87.4,690.5 L87.4,750.3 L79,750.3 Z" fill="#fff"/></svg>
<div class="dig" style="left:616px;top:214.8px;font-size:85.5px;line-height:85.5px">2</div>
</body></html>
